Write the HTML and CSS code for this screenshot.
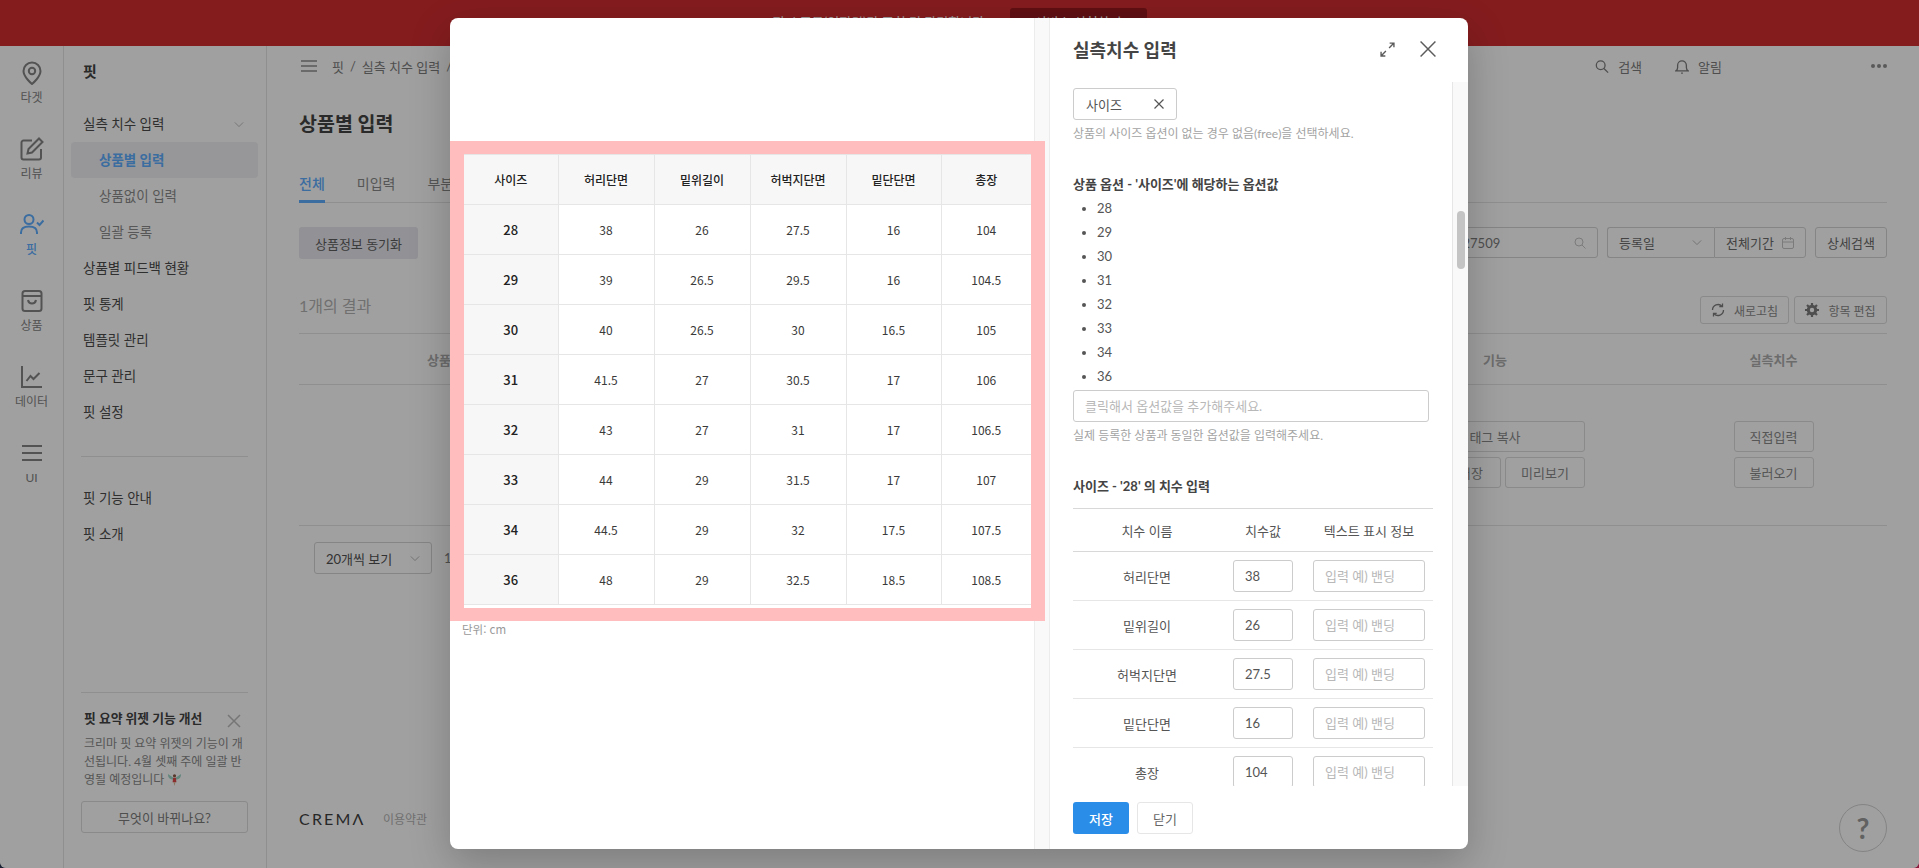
FILE: index.html
```html
<!DOCTYPE html>
<html lang="ko">
<head>
<meta charset="utf-8">
<title>실측치수 입력</title>
<link rel="stylesheet" href="styles.css">
</head>
<body>
<div class="app">
  <div class="banner">
    <span class="banner-text">전시 품목(임직원)만 조회 및 관리합니다.</span>
    <span class="banner-btn">서비스 신청하기</span>
  </div>
  <div class="shell">
    <nav class="rail">
      <a class="rail-item">
        <svg class="rail-icon" viewBox="0 0 24 24"><path d="M12 23s-8.500-7-8.500-13a8.500 8.500 0 0 1 17 0c0 6-8.500 13-8.500 13z"/><circle cx="12" cy="10" r="3.200"/></svg>
        <span>타겟</span>
      </a>
      <a class="rail-item">
        <svg class="rail-icon" viewBox="0 0 24 24"><path d="M12 3.500H3.500a2 2 0 0 0-2 2V20.500a2 2 0 0 0 2 2H19a2 2 0 0 0 2-2V12"/><path d="M19 1.500l3.500 3.500L12 15.500l-4.500 1 1-4.500z"/></svg>
        <span>리뷰</span>
      </a>
      <a class="rail-item rail-active">
        <svg class="rail-icon" viewBox="0 0 24 24"><circle cx="9" cy="6.500" r="4.500"/><path d="M1 21v-1.500C1 15.500 4 13.500 9 13.500s8 2 8 6V21"/><path d="M17 9.500l2.500 2.500 4-4.500"/></svg>
        <span>핏</span>
      </a>
      <a class="rail-item">
        <svg class="rail-icon" viewBox="0 0 24 24"><rect x="2.500" y="2" width="19" height="20" rx="2.500"/><path d="M2.500 7h19"/><path d="M8 11c.5 2.500 2 3.500 4 3.500s3.500-1 4-3.500"/></svg>
        <span>상품</span>
      </a>
      <a class="rail-item">
        <svg class="rail-icon" viewBox="0 0 24 24"><path d="M2 1v21h20"/><path d="M6.500 16l4-5 3 3 6-6"/></svg>
        <span>데이터</span>
      </a>
      <a class="rail-item">
        <svg class="rail-icon" viewBox="0 0 24 24"><path d="M2 5h20M2 12h20M2 19h20"/></svg>
        <span>UI</span>
      </a>
    </nav>

    <aside class="sidebar">
      <h2 class="side-title">핏</h2>
      <ul class="side-menu">
        <li class="side-item side-parent">실측 치수 입력
          <svg class="chev" viewBox="0 0 12 8"><path d="M1 1.500l5 5 5-5"/></svg>
        </li>
        <li class="side-sub side-current">상품별 입력</li>
        <li class="side-sub">상품없이 입력</li>
        <li class="side-sub">일괄 등록</li>
        <li class="side-item">상품별 피드백 현황</li>
        <li class="side-item">핏 통계</li>
        <li class="side-item">템플릿 관리</li>
        <li class="side-item">문구 관리</li>
        <li class="side-item">핏 설정</li>
      </ul>
      <div class="side-divider"></div>
      <ul class="side-menu side-menu-second">
        <li class="side-item">핏 기능 안내</li>
        <li class="side-item">핏 소개</li>
      </ul>
      <div class="notice">
        <div class="notice-head">
          <strong>핏 요약 위젯 기능 개선</strong>
          <svg class="notice-close" viewBox="0 0 14 14"><path d="M1 1l12 12M13 1L1 13"/></svg>
        </div>
        <p class="notice-text">크리마 핏 요약 위젯의 기능이 개선됩니다. 4월 셋째 주에 일괄 반영될 예정입니다
          <svg class="fairy" viewBox="0 0 16 16"><path d="M8 7L1 2c0 4 2 6 6 6zM8 7l7-5c0 4-2 6-6 6z" fill="#9fd6c8"/><circle cx="8" cy="4" r="1.700" fill="#8a5a44"/><path d="M6.500 6h3L10 11H6z" fill="#e04848"/><path d="M7 11h2l-1 4z" fill="#d9b48f"/></svg>
        </p>
        <button class="notice-btn" type="button">무엇이 바뀌나요?</button>
      </div>
    </aside>

    <main class="main">
      <header class="topbar">
        <div class="crumbs">
          <svg class="burger" viewBox="0 0 16 12"><path d="M0 1h16M0 6h16M0 11h16"/></svg>
          <span>핏</span><i>/</i><span>실측 치수 입력</span><i>/</i><span>상품별 입력</span>
        </div>
        <div class="top-actions">
          <span class="top-action"><svg class="top-icon" viewBox="0 0 16 16"><circle cx="6.500" cy="6.500" r="5"/><path d="M10.200 10.200L15 15"/></svg>검색</span>
          <span class="top-action"><svg class="top-icon" viewBox="0 0 16 16"><path d="M1 13h14c-1.500-1-2-2-2-4V6.500a5 5 0 0 0-10 0V9c0 2-.5 3-2 4z"/><path d="M7 15.500h2"/></svg>알림</span>
          <span class="more"><b></b><b></b><b></b></span>
        </div>
      </header>
      <h1 class="page-title">상품별 입력</h1>
      <div class="tabs">
        <span class="tab tab-active">전체</span>
        <span class="tab">미입력</span>
        <span class="tab">부분입력</span>
      </div>
      <div class="toolbar">
        <button class="sync" type="button">상품정보 동기화</button>
        <div class="filters">
          <div class="ctl search">127509
            <svg class="search-icon" viewBox="0 0 12 12"><circle cx="5" cy="5" r="4"/><path d="M8 8l3.500 3.500"/></svg>
          </div>
          <div class="joined">
            <div class="ctl date-type">등록일<svg class="chev" viewBox="0 0 12 8"><path d="M1 1.500l5 5 5-5"/></svg></div>
            <div class="ctl date-range">전체기간<svg class="cal" viewBox="0 0 12 12"><rect x=".5" y="1.500" width="11" height="10" rx="1.500"/><path d="M.5 5h11M3.500 0v3M8.500 0v3"/></svg></div>
          </div>
          <div class="ctl detail">상세검색</div>
        </div>
      </div>
      <div class="result-bar">
        <span class="result-count">1개의 결과</span>
        <div class="result-actions">
          <button class="mini mini-refresh" type="button"><svg class="mini-icon" viewBox="0 0 14 14"><path d="M1.500 7a5.500 5.500 0 0 1 9.500-3.700"/><path d="M12.500 7A5.500 5.500 0 0 1 3 10.700"/><path d="M11.500 .5v3.200H8.300M2.500 13.500v-3.200h3.200"/></svg>새로고침</button>
          <button class="mini mini-edit" type="button"><svg class="mini-icon gear" viewBox="0 0 14 14"><circle cx="7" cy="7" r="3.700" fill="none" stroke-width="3"/><path d="M7 0v3M7 11v3M0 7h3M11 7h3M2 2l2 2M10 10l2 2M12 2l-2 2M4 10l-2 2" stroke-width="2.200"/></svg>항목 편집</button>
        </div>
      </div>
      <div class="list-grid list-head">
        <span>상품정보</span><span></span><span>기능</span><span></span><span>실측치수</span>
      </div>
      <div class="list-grid list-row">
        <span></span><span></span>
        <div class="cell-btns">
          <button class="cell-btn wide" type="button">태그 복사</button>
          <div class="cell-pair">
            <button class="cell-btn short" type="button">저장</button>
            <button class="cell-btn" type="button">미리보기</button>
          </div>
        </div>
        <span></span>
        <div class="cell-btns centered">
          <button class="cell-btn size" type="button">직접입력</button>
          <button class="cell-btn size" type="button">불러오기</button>
        </div>
      </div>
      <div class="pager">
        <div class="ctl per-page">20개씩 보기<svg class="chev" viewBox="0 0 12 8"><path d="M1 1.500l5 5 5-5"/></svg></div>
        <span class="page-no">1</span>
      </div>
      <footer class="foot">
        <span class="logo">CREMΛ</span>
        <span class="terms">이용약관</span>
      </footer>
    </main>
  </div>

  <div class="overlay"></div>

  <button class="help" type="button">?</button>

  <section class="modal">
    <div class="preview">
      <div class="highlight">
        <div class="sheet">
        <table class="size-table">
          <thead>
            <tr><th class="c1">사이즈</th><th class="c2">허리단면</th><th class="c3">밑위길이</th><th class="c4">허벅지단면</th><th class="c5">밑단단면</th><th class="c6">총장</th></tr>
          </thead>
          <tbody>
            <tr><th>28</th><td>38</td><td>26</td><td>27.5</td><td>16</td><td>104</td></tr>
            <tr><th>29</th><td>39</td><td>26.5</td><td>29.5</td><td>16</td><td>104.5</td></tr>
            <tr><th>30</th><td>40</td><td>26.5</td><td>30</td><td>16.5</td><td>105</td></tr>
            <tr><th>31</th><td>41.5</td><td>27</td><td>30.5</td><td>17</td><td>106</td></tr>
            <tr><th>32</th><td>43</td><td>27</td><td>31</td><td>17</td><td>106.5</td></tr>
            <tr><th>33</th><td>44</td><td>29</td><td>31.5</td><td>17</td><td>107</td></tr>
            <tr><th>34</th><td>44.5</td><td>29</td><td>32</td><td>17.5</td><td>107.5</td></tr>
            <tr><th>36</th><td>48</td><td>29</td><td>32.5</td><td>18.5</td><td>108.5</td></tr>
          </tbody>
        </table>
        </div>
      </div>
      <p class="unit">단위: cm</p>
    </div>
    <div class="preview-gutter"></div>
    <div class="panel">
      <div class="panel-head">
        <h2>실측치수 입력</h2>
        <div class="panel-tools">
          <svg class="tool-expand" viewBox="0 0 14 14"><path d="M8.500 5.500L13 1M9 1h4v4M5.500 8.500L1 13M1 9v4h4"/></svg>
          <svg class="tool-close" viewBox="0 0 14 14"><path d="M.5.5l13 13M13.500.5l-13 13"/></svg>
        </div>
      </div>
      <div class="panel-body">
        <div class="panel-scroll">
          <div class="picker">사이즈<svg class="picker-x" viewBox="0 0 10 10"><path d="M.5.5l9 9M9.500.5l-9 9"/></svg></div>
          <p class="hint">상품의 사이즈 옵션이 없는 경우 없음(free)을 선택하세요.</p>
          <h3 class="sec sec-options">상품 옵션 - '사이즈'에 해당하는 옵션값</h3>
          <ul class="options">
            <li>28</li><li>29</li><li>30</li><li>31</li><li>32</li><li>33</li><li>34</li><li>36</li>
          </ul>
          <input class="field field-full" type="text" placeholder="클릭해서 옵션값을 추가해주세요.">
          <p class="hint">실제 등록한 상품과 동일한 옵션값을 입력해주세요.</p>
          <h3 class="sec sec-dim">사이즈 - '28' 의 치수 입력</h3>
          <table class="dim-table">
            <thead>
              <tr><th class="d1">치수 이름</th><th class="d2">치수값</th><th class="d3">텍스트 표시 정보</th></tr>
            </thead>
            <tbody>
              <tr><td>허리단면</td><td><input class="field field-val" type="text" value="38"></td><td><input class="field field-text" type="text" placeholder="입력 예) 밴딩"></td></tr>
              <tr><td>밑위길이</td><td><input class="field field-val" type="text" value="26"></td><td><input class="field field-text" type="text" placeholder="입력 예) 밴딩"></td></tr>
              <tr><td>허벅지단면</td><td><input class="field field-val" type="text" value="27.5"></td><td><input class="field field-text" type="text" placeholder="입력 예) 밴딩"></td></tr>
              <tr><td>밑단단면</td><td><input class="field field-val" type="text" value="16"></td><td><input class="field field-text" type="text" placeholder="입력 예) 밴딩"></td></tr>
              <tr><td>총장</td><td><input class="field field-val" type="text" value="104"></td><td><input class="field field-text" type="text" placeholder="입력 예) 밴딩"></td></tr>
            </tbody>
          </table>
        </div>
        <div class="panel-track"><div class="panel-thumb"></div></div>
      </div>
      <div class="panel-foot">
        <button class="btn-save" type="button">저장</button>
        <button class="btn-close" type="button">닫기</button>
      </div>
    </div>
  </section>
</div>
</body>
</html>
```

FILE: styles.css
```css
* { box-sizing: border-box; }
html, body { margin: 0; height: 100%; }
html { background: linear-gradient(to right, #1a2233 50%, #8c1a3c 50%); }
body {
  overflow: hidden;
  font-family: Lato, "Noto Sans CJK KR", sans-serif;
  font-size: 13px;
  color: #515151;
}
button, input { font: inherit; }
h1, h2, h3, p, ul { margin: 0; padding: 0; }
ul { list-style: none; }
svg { display: block; fill: none; stroke: currentColor; }

.app {
  position: relative;
  width: 1919px;
  height: 868px;
  overflow: hidden;
  display: flex;
  flex-direction: column;
  background: #fff;
  border-radius: 0 0 6px 6px;
}

/* banner */
.banner {
  flex: 0 0 46px;
  display: flex;
  justify-content: center;
  gap: 17px;
  padding-top: 8px;
  background: #d32e31;
  color: #fff;
}
.banner-text { width: 220px; margin-top: 5px; white-space: nowrap; overflow: hidden; line-height: 18px; }
.banner-btn {
  width: 137px;
  height: 30px;
  background: #98191d;
  border-radius: 3px;
  text-align: center;
  line-height: 28px;
}

.shell { flex: 1; display: flex; min-height: 0; }

/* icon rail */
.rail {
  flex: 0 0 64px;
  border-right: 1px solid #e4e4e4;
  padding-top: 12px;
}
.rail-item {
  height: 76px;
  padding-top: 3px;
  display: flex;
  flex-direction: column;
  align-items: center;
  gap: 4px;
  color: #848484;
  font-size: 12px;
  line-height: 18px;
}
.rail-icon { width: 24px; height: 24px; stroke-width: 2; }
.rail-active { color: #5eaeff; font-weight: 500; }

/* sidebar */
.sidebar {
  flex: 0 0 203px;
  display: flex;
  flex-direction: column;
  border-right: 1px solid #e4e4e4;
  padding: 0 18px 0 17px;
  font-size: 13.500px;
}
.side-title { height: 50px; padding-left: 2px; font-size: 15px; line-height: 50px; font-weight: 700; color: #444; }
.side-menu { margin-top: 10px; }
.side-item, .side-sub { height: 36px; line-height: 36px; padding-left: 2px; color: #4c4c4c; }
.side-parent { display: flex; align-items: center; justify-content: space-between; padding-right: 4px; }
.side-parent .chev { color: #b0b0b0; }
.side-sub { padding-left: 18px; color: #8b8b8b; }
.side-current {
  margin: 0 -10px 0 -10px;
  padding-left: 28px;
  background: #f1f1f5;
  border-radius: 4px;
  color: #5eaeff;
  font-weight: 700;
}
.chev { width: 10px; height: 7px; color: #aaa; stroke-width: 1; }
.side-divider { height: 1px; margin-top: 26px; background: #e4e4e4; }
.side-menu-second { margin-top: 23px; }

.notice {
  margin-top: auto;
  margin-bottom: 35px;
  border-top: 1px solid #e4e4e4;
  padding-top: 14px;
}
.notice-head { position: relative; padding-left: 3px; line-height: 22px; font-size: 12.800px; color: #444; }
.notice-close { position: absolute; right: 7px; top: 7px; width: 14px; height: 14px; color: #bcbcbc; stroke-width: 1.500; }
.notice-text { margin-top: 6px; padding-left: 3px; width: 163px; font-size: 12px; line-height: 18px; color: #8a8a8a; }
.fairy { display: inline-block; width: 15px; height: 15px; vertical-align: -3px; stroke: none; }
.notice-btn {
  display: block;
  width: 100%;
  height: 32px;
  margin-top: 12px;
  background: transparent;
  border: 1px solid #dcdcdc;
  border-radius: 3px;
  color: #7d7d7d;
  font-size: 13px;
}

/* main */
.main { flex: 1; min-width: 0; padding: 0 32px; display: flex; flex-direction: column; }
.topbar { height: 40px; display: flex; align-items: center; justify-content: space-between; }
.crumbs { display: flex; align-items: center; gap: 5px; color: #7d7d7d; }
.crumbs i { font-style: normal; margin: 0 1px; }
.burger { width: 16px; height: 12px; margin: 0 10px 0 2px; color: #8f8f8f; stroke-width: 1.500; }
.top-actions { display: flex; align-items: center; color: #7d7d7d; }
.top-action { display: flex; align-items: center; gap: 9px; margin-right: 33px; }
.top-icon { width: 14px; height: 15px; color: #7d7d7d; stroke-width: 1.500; }
.more { display: flex; gap: 2px; margin-left: 116px; }
.more b { width: 4px; height: 4px; border-radius: 50%; background: #8f8f8f; }

.page-title { margin-top: 22px; height: 32px; line-height: 32px; font-size: 19.500px; font-weight: 700; color: #444; }
.tabs {
  display: flex;
  gap: 32px;
  height: 31px;
  margin-top: 32px;
  border-bottom: 1px solid #e4e4e4;
  color: #8a8a8a;
  font-size: 14px;
  line-height: 24px;
}
.tab { height: 31px; }
.tab-active { color: #5eaeff; border-bottom: 3px solid #5eaeff; font-weight: 500; }

.toolbar { display: flex; justify-content: space-between; align-items: flex-start; margin-top: 24px; }
.sync {
  width: 119px;
  height: 32px;
  background: #e9e9ef;
  border: 0;
  border-radius: 3px;
  color: #5f5f5f;
  font-size: 13px;
}
.filters { display: flex; gap: 9px; }
.ctl {
  display: flex;
  align-items: center;
  justify-content: space-between;
  height: 31px;
  border: 1px solid #d4d4d4;
  border-radius: 3px;
  padding: 0 11px;
  color: #6b6b6b;
}
.search { width: 155px; color: #7d7d7d; }
.search-icon { width: 12px; height: 12px; color: #c4c4c4; }
.joined { display: flex; }
.date-type { width: 107px; border-radius: 3px 0 0 3px; border-right: 0; padding-right: 12px; }
.date-range { width: 92px; border-radius: 0 3px 3px 0; }
.cal { width: 12px; height: 12px; color: #c4c4c4; }
.detail { width: 72px; justify-content: center; }

.result-bar { display: flex; justify-content: space-between; height: 75px; border-bottom: 1px solid #e4e4e4; padding-top: 37px; }
.result-count { font-size: 16px; color: #b3b3b3; line-height: 20px; }
.result-actions { display: flex; gap: 5px; height: 28px; }
.mini {
  display: flex;
  align-items: center;
  justify-content: center;
  gap: 9px;
  height: 28px;
  padding: 0;
  background: transparent;
  border: 1px solid #dcdcdc;
  border-radius: 3px;
  color: #8a8a8a;
  font-size: 12px;
}
.mini-refresh { width: 89px; }
.mini-edit { width: 93px; }
.mini-icon { width: 14px; height: 14px; stroke-width: 1.300; color: #7d7d7d; }
.gear { stroke-width: 2; }

.list-grid { display: grid; grid-template-columns: 304px 1fr 180px 75px 227px; }
.list-head {
  height: 51px;
  align-items: center;
  justify-items: center;
  border-bottom: 1px solid #e4e4e4;
  color: #adadad;
  font-weight: 700;
}
.list-row { height: 141px; padding-top: 36px; border-bottom: 1px solid #e4e4e4; }
.cell-btns { display: flex; flex-direction: column; gap: 5px; }
.cell-btns.centered { align-items: center; }
.cell-pair { display: flex; gap: 4px; justify-content: flex-end; }
.cell-btn {
  height: 31px;
  width: 80px;
  background: transparent;
  border: 1px solid #dcdcdc;
  border-radius: 3px;
  color: #8a8a8a;
}
.cell-btn.wide { width: 100%; }
.cell-btn.short { width: 60px; }

.pager { display: flex; align-items: center; gap: 12px; margin-top: 16px; padding-left: 15px; }
.per-page { width: 118px; height: 32px; color: #515151; }
.page-no { color: #7d7d7d; }

.foot { display: flex; align-items: center; gap: 24px; margin-top: 235px; }
.logo { width: 60px; font-size: 16px; letter-spacing: 2.200px; color: #3f3f3f; white-space: nowrap; }
.terms { color: #b3b3b3; font-size: 12px; }

/* overlay + help */
.overlay { position: absolute; inset: 0; background: rgba(0, 0, 0, .373); }
.help {
  position: absolute;
  left: 1839px;
  top: 804px;
  width: 48px;
  height: 48px;
  border-radius: 50%;
  border: 1px solid #848484;
  background: #a0a0a0;
  color: #616161;
  font-size: 28px;
  font-weight: 700;
  line-height: 46px;
  padding: 0;
}

/* modal */
.modal {
  position: absolute;
  left: 450px;
  top: 18px;
  width: 1018px;
  height: 831px;
  display: flex;
  background: #fff;
  border-radius: 8px;
  box-shadow: 0 14px 40px rgba(0, 0, 0, .22);
  overflow: hidden;
}
.preview { flex: 0 0 584px; min-width: 0; padding-top: 123px; position: relative; z-index: 1; }
.highlight {
  width: 595px;
  padding: 13px 14px;
  background: #ffbdbd;
}
.sheet { background: #fff; padding-bottom: 3px; }
.size-table {
  width: 567px;
  border-collapse: collapse;
  table-layout: fixed;
  font-family: "Noto Sans CJK KR", sans-serif;
  font-size: 12px;
  color: #3a3a3a;
}
.size-table th, .size-table td {
  height: 50px;
  padding: 0;
  text-align: center;
  border: 1px solid #e6e6e6;
  border-right: 0;
  font-weight: 400;
}
.size-table tr > :first-child { border-left: 0; }
.size-table th { background: #f7f7f7; font-weight: 500; color: #222; }
.size-table tbody th { font-size: 13px; }
.size-table .c1 { width: 94px; }
.size-table .c2, .size-table .c3, .size-table .c4 { width: 96px; }
.size-table .c5 { width: 95px; }
.unit { margin: 0 0 0 12px; font-family: "Noto Sans CJK KR", sans-serif; font-size: 11.500px; line-height: 16px; color: #999; }

.preview-gutter { flex: 0 0 16px; background: #f9f9f9; border: solid #ececec; border-width: 0 1px; }

.panel { flex: 1; min-width: 0; display: flex; flex-direction: column; }
.panel-head {
  flex: 0 0 64px;
  display: flex;
  align-items: center;
  justify-content: space-between;
  padding: 0 32px 2px 23px;
}
.panel-head h2 { font-size: 18px; font-weight: 700; color: #444; }
.panel-tools { display: flex; align-items: center; gap: 25px; color: #5c5c5c; }
.tool-expand { width: 15px; height: 15px; stroke-width: 1.300; }
.tool-close { width: 16px; height: 16px; stroke-width: 1.300; }

.panel-body { flex: 1; min-height: 0; display: flex; }
.panel-scroll { flex: 1; min-width: 0; overflow: hidden; padding: 6px 20px 0 23px; }
.panel-track { flex: 0 0 15px; padding: 129px 3px 0 4px; background: #f9f9f9; border-left: 1px solid #e6e6e6; }
.panel-thumb { width: 8px; height: 58px; border-radius: 4px; background: #c4c4c4; }

.picker {
  display: flex;
  align-items: center;
  justify-content: space-between;
  width: 104px;
  height: 32px;
  padding: 0 12px;
  border: 1px solid #ccc;
  border-radius: 3px;
  color: #555;
}
.picker-x { width: 10px; height: 10px; stroke-width: 1.200; color: #555; }
.hint { margin-top: 5px; font-size: 12px; line-height: 18px; color: #a3a3a3; }
.sec { font-size: 13px; font-weight: 700; color: #444; line-height: 20px; }
.sec-options { margin-top: 31px; }
.options { list-style: disc; padding-left: 24px; margin-top: 2px; margin-bottom: 2px; color: #555; }
.options li { height: 24px; line-height: 24px; }
.field {
  display: block;
  height: 32px;
  border: 1px solid #ccc;
  border-radius: 3px;
  padding: 0 11px;
  background: #fff;
  color: #555;
  outline: 0;
}
.field::placeholder { color: #b8b8b8; opacity: 1; }
.field-full { width: 356px; }
.sec-dim { margin-top: 31px; }
.dim-table {
  width: 360px;
  margin-top: 12px;
  border-collapse: collapse;
  table-layout: fixed;
  border-top: 1px solid #d8d8d8;
  color: #555;
}
.dim-table th { height: 43px; font-weight: 400; border-bottom: 1px solid #d8d8d8; color: #555; padding: 0; }
.dim-table td { height: 49px; padding: 0; text-align: center; border-bottom: 1px solid #e6e6e6; }
.dim-table .d1 { width: 148px; }
.dim-table .d2 { width: 84px; }
.field-val { width: 60px; margin: 0 12px; }
.field-text { width: 112px; margin: 0 8px; }

.panel-foot { flex: 0 0 63px; display: flex; gap: 8px; padding: 16px 0 0 23px; }
.btn-save, .btn-close { width: 56px; height: 32px; border-radius: 3px; }
.btn-save { background: #2a8de8; border: 0; color: #fff; font-weight: 500; }
.btn-close { background: #fff; border: 1px solid #e6e6e6; color: #666; }
```
